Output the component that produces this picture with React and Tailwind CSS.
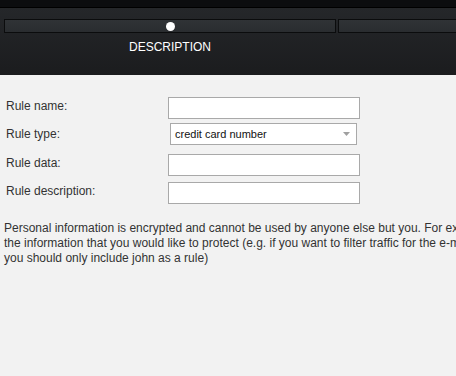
import React from "react";

const Label = ({ children, offset }) => (
  <div className={`w-[162px] shrink-0 text-[12px] leading-[14px] text-[#333] ${offset}`}>{children}</div>
);

const TextBox = () => (
  <div className="w-[192px] h-[22px] border border-[#a9a9a9] bg-white" />
);

const App = () => {
  return (
    <div className="w-[456px] h-[376px] overflow-hidden bg-[#f2f2f2] font-['Liberation_Sans',Arial,sans-serif]">
      <div className="h-[8px] bg-[#0c0d0f] border-b border-black" />
      <div className="h-[67px] bg-gradient-to-b from-[#25272a] to-[#1b1c1e] pt-[11px]">
        <div className="flex gap-[2px] pl-[4px]">
          <div className="w-[332px] h-[14px] shrink-0 border border-[#0b0c0d] bg-gradient-to-b from-[#303336] to-[#2a2d30] flex items-center justify-center">
            <div className="w-[9px] h-[9px] rounded-full bg-white" />
          </div>
          <div className="w-[200px] h-[14px] shrink-0 border border-[#0b0c0d] bg-gradient-to-b from-[#303336] to-[#2a2d30]" />
        </div>
        <div className="w-[340px] mt-[7px] text-center text-white text-[12px] leading-[14px]">
          DESCRIPTION
        </div>
      </div>

      <div className="pt-[22px] pl-[6px]">
        <div className="flex items-start">
          <Label offset="mt-[2px]">Rule name:</Label>
          <TextBox />
        </div>
        <div className="flex items-start mt-[4px]">
          <Label offset="mt-[4px]">Rule type:</Label>
          <div className="ml-[2px] w-[187px] h-[22px] border border-[#a9a9a9] bg-white flex items-center justify-between pl-[4px] pr-[6px]">
            <span className="text-[11px] text-[#111]">credit card number</span>
            <svg width="7" height="4" viewBox="0 0 7 4">
              <path d="M0 0 H7 L3.5 4 Z" fill="#a0a0a0" />
            </svg>
          </div>
        </div>
        <div className="flex items-start mt-[9px]">
          <Label offset="mt-[2px]">Rule data:</Label>
          <TextBox />
        </div>
        <div className="flex items-start mt-[6px]">
          <Label offset="mt-[2px]">Rule description:</Label>
          <TextBox />
        </div>
      </div>

      <p className="mt-[17px] pl-[4px] whitespace-nowrap text-[12px] leading-[15px] text-[#333]">
        Personal information is encrypted and cannot be used by anyone else but you. For example, enter only the part of
        <br />
        the information that you would like to protect (e.g. if you want to filter traffic for the e-mail address john@example.com,
        <br />
        you should only include john as a rule)
      </p>
    </div>
  );
};

export default App;
